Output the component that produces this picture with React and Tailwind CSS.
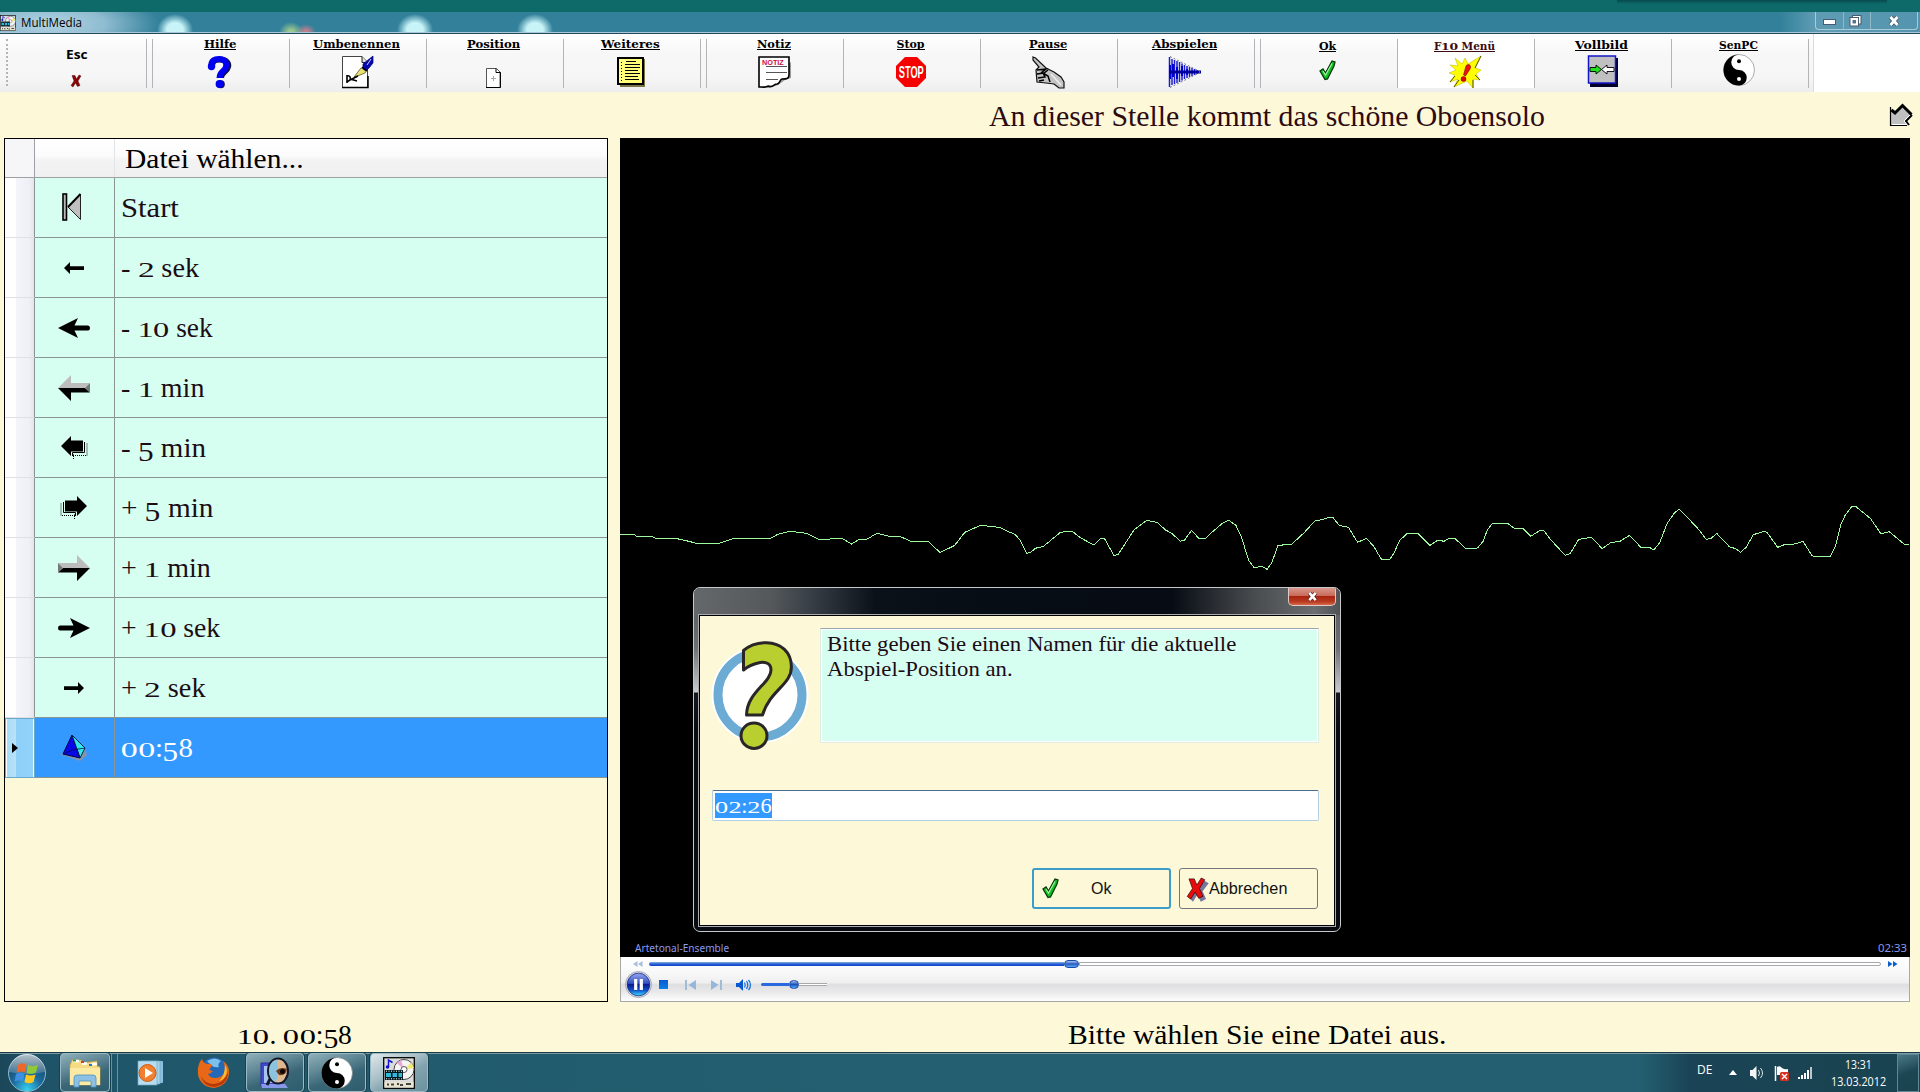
import React, { useLayoutEffect, useRef, useState } from "react";

/* Single-line text stretched horizontally to an exact width. */
function Fit({ w, children, className = "" }) {
  const ref = useRef(null);
  const [s, setS] = useState(1);
  useLayoutEffect(() => {
    if (ref.current) setS(w / ref.current.offsetWidth);
  }, [w]);
  return (
    <span className={"inline-block whitespace-pre text-left " + className} style={{ width: w }}>
      <span ref={ref} className="inline-block origin-left" style={{ transform: `scaleX(${s})` }}>
        {children}
      </span>
    </span>
  );
}

/* Old-style numerals: 0-2 at x-height, 3-5/7/9 hanging below the baseline. */
function OldStyle({ text }) {
  return text.split(/([0-9])/).filter(Boolean).map((c, i) => {
    if (/[012]/.test(c))
      return <span key={i} className="inline-block leading-none origin-[50%_84%] scale-x-[1.18] scale-y-[0.75] mx-[0.045em]">{c}</span>;
    if (/[34579]/.test(c)) return <span key={i} className="inline-block leading-none relative top-[0.16em] scale-x-[1.08] mx-[0.02em]">{c}</span>;
    return <span key={i}>{c}</span>;
  });
}

const SERIF = "font-['Georgia','Liberation_Serif',serif]";

const Svg = ({ w = 32, h = 32, children, crisp, className = "" }) => (
  <svg width={w} height={h} viewBox={`0 0 ${w} ${h}`} className={"block shrink-0 overflow-visible " + className} shapeRendering={crisp ? "crispEdges" : "auto"}>
    {children}
  </svg>
);

const HelpIcon = () => (
  <Svg>
    <g fill="none" stroke="#10103a" strokeWidth="6">
      <path d="M8 11C8 4 12 3.500 16 3.500C23 3.500 25 8 24 11C23 16 17 16 17 22" />
    </g>
    <circle cx="16.800" cy="28.300" r="4" fill="#10103a" />
    <g fill="none" stroke="#0000f0" strokeWidth="6">
      <path d="M7.500 11C6.500 4 11 3 15 3C21 3 23 7 22 11C21 15.500 15.500 15 15.500 22" />
    </g>
    <circle cx="7.500" cy="10.500" r="3.700" fill="#0000f0" />
    <circle cx="15.500" cy="28" r="3.900" fill="#0000f0" />
  </Svg>
);

const RenameIcon = () => (
  <Svg>
    <path d="M1.500 .5H21L26.500 6V31.500H1.500Z" fill="#fff" stroke="#444" />
    <path d="M21 .5V6.500H26.500" fill="#ddd" stroke="#222" />
    <path d="M1 31.500H27V20" fill="none" stroke="#000" strokeWidth="1.500" />
    <path d="M13 21L20 12L26 14L24 17L19 19Z" fill="#e8e070" stroke="#55551a" strokeWidth=".8" />
    <path d="M22 8L32 0V7L28 12L25 15L22 13Z" fill="#0808b0" stroke="#000070" strokeWidth=".7" />
    <path d="M21 11L26 15" stroke="#000" strokeWidth="1.500" />
    <path d="M26 9L30 3" stroke="#fff" strokeWidth=".8" />
    <path d="M6 19V27M6 20C9 19 10 22 9 24L6 26M9 24L17 20M9 23L16 25" fill="none" stroke="#000" strokeWidth="1.600" />
  </Svg>
);

const PageIcon = () => (
  <Svg w={16} h={20} className="-ml-[1px]">
    <path d="M1.500 .5H11.500L15 4V19.500H1.500Z" fill="#fff" stroke="#555" />
    <path d="M11 .5V4.500H15.500V19.500H1" fill="none" stroke="#000" />
    <path d="M6 10.500H11M8.500 8V13" stroke="#aaa" />
  </Svg>
);

const MoreIcon = () => (
  <Svg w={30} crisp>
    <rect x="4" y="3" width="25" height="28" fill="#77774a" />
    <rect x="2" y="2" width="25" height="26" fill="#ffff7a" stroke="#000" strokeWidth="1.500" />
    <path d="M10 5H20M9 8H24M9 11H24M9 14H22M9 17H24M9 20H22M9 23H23" stroke="#000" strokeWidth="1" />
    <path d="M5.500 6V25" stroke="#000" strokeDasharray="1 2" strokeWidth="1.500" />
  </Svg>
);

const NoteIcon = () => (
  <Svg>
    <path d="M3 31L3 32H12L20 29L27 24L33 22V6Z" fill="#999" />
    <path d="M1 1H31V19C31 23 28 23 24 23C21 24 23 27 19 28C16 28 15 31 12 30.500C9 29 8 32 5 31H1Z" fill="#fff" stroke="#000" strokeWidth="1.600" />
    <text transform="translate(4 8.500) scale(1.04 1)" fontSize="7" fill="#d0103a" fontFamily="Liberation Sans" fontWeight="bold">NOTIZ</text>
    <path d="M8 10.500H29M8 16.500H29M8 23.500H20" stroke="#555" />
  </Svg>
);

const StopIcon = () => (
  <Svg>
    <path d="M10 1H22L31 10V22L22 31H10L1 22V10Z" fill="#f60000" />
    <text transform="translate(3.700 21.500) scale(.58 1)" fontSize="16" fill="#fff" fontFamily="Liberation Sans" fontWeight="bold">STOP</text>
  </Svg>
);

const HandIcon = () => (
  <Svg>
    <path d="M1 1L3.500 2L14 12L22 16L29 21L32 26V32H27L22 28L14 27L5 26L4 14L7 11L1 4Z" fill="#c4c4c4" stroke="#111" strokeWidth="1.200" />
    <path d="M5 14L14 13L9 17M5 18L12 17L16 14M6 22L13 21L11 17L16 20L18 26M7 25L12 24" fill="none" stroke="#000" strokeWidth="1.500" />
    <path d="M19 18L29 29" stroke="#eee" strokeWidth="1.500" />
  </Svg>
);

const PlayIcon = () => (
  <Svg>
    <path d="M.5 1V31M3 3V29M5.500 4V28M8 5V27M10.500 6V26M13 7.500V24.500M15.500 9V23M18 10V22M20.500 11V21M23 12V20M25.500 13V19M28 14V18" stroke="#1c1ccc" strokeWidth="1.500" />
    <path d="M1 9V23M4 8V21M8 11V23M13 10V20M18 13V19" stroke="#0000d8" strokeWidth="2" />
    <path d="M0 16H32" stroke="#00009a" strokeWidth="3" />
    <path d="M1 .5L31 15.500M1 31.500L31 16.500" stroke="#777790" strokeDasharray="2 2" />
  </Svg>
);

const CheckIcon = ({ w = 17, h = 21 }) => (
  <svg width={w} height={h} viewBox="0 0 17 21" className="block shrink-0">
    <path d="M1 11L4 9L6.500 13L13 1L16 2L15 6L8.500 19L6 19.500Z" fill="#10c020" stroke="#033a08" strokeWidth="1.300" />
    <path d="M4 11L6.500 15L13 3.500" fill="none" stroke="#a8f0a8" strokeWidth="1.200" />
  </svg>
);

const BurstIcon = () => (
  <Svg>
    <path d="M6 2L13 8L16 2L19 8L32 0L26 12L32 14L27 18L31 24L24 23L24 32L18 25L5 31L9 23L1 26L6 19L0 17L7 14L1 9L9 10Z" fill="#ffff00" stroke="#c8c000" strokeWidth=".6" />
    <path d="M32 0L26 12M24 32V24M5 31L10 24M1 26L6 20M26 19L31 24" stroke="#555500" strokeWidth="1" />
    <path d="M17 10C19 7 23 9 21 13L16.500 20L14.500 19Z" fill="#f01010" stroke="#700" strokeWidth=".6" />
    <circle cx="14.500" cy="23" r="2.500" fill="#e00000" stroke="#700" strokeWidth=".5" />
  </Svg>
);

const FullIcon = () => (
  <Svg w={32}>
    <rect x="4" y="3" width="28" height="29" fill="#00002a" />
    <rect x="2.500" y="1" width="27" height="27" fill="#c0c0c0" stroke="#1414c8" strokeWidth="1.500" />
    <path d="M4 12.500H10V10L15.500 14.500L10 19V16.500H4Z" fill="#20e020" stroke="#000" strokeWidth=".9" />
    <path d="M28 12.500H21V10L15.500 14.500L21 19V16.500H28Z" fill="#fff" stroke="#000" strokeWidth=".9" />
  </Svg>
);

const YinYang = ({ s = 32 }) => (
  <svg width={s} height={s} viewBox="0 0 32 32" className="block shrink-0">
    <circle cx="16" cy="16" r="15.500" fill="#fff" stroke="#777" strokeWidth=".6" />
    <path d="M16 .5A15.500 15.500 0 0 0 16 31.500A7.750 7.750 0 0 0 16 16A7.750 7.750 0 0 1 16 .5Z" fill="#000" />
    <circle cx="16" cy="7.300" r="2" fill="#000" />
    <circle cx="16" cy="25" r="2" fill="#fff" />
  </svg>
);

const MediaIcon = ({ s = 32 }) => (
  <svg width={s} height={s} viewBox="0 0 32 32" className="block shrink-0">
    <rect x=".7" y=".7" width="30.600" height="30.600" fill="#dcdcdc" stroke="#000" strokeWidth="1.300" />
    <circle cx="21" cy="12.500" r="10" fill="#f4f4f4" stroke="#444" />
    <path d="M21 12.500L28 5.500A10 10 0 0 1 31 11Z" fill="#f0e878" />
    <path d="M21 12.500L14 6A10 10 0 0 1 18 3Z" fill="#e8a8d8" />
    <circle cx="21" cy="12.500" r="3" fill="#fff" stroke="#555" />
    <path d="M5.500 10V3L9.500 5.500" fill="none" stroke="#1010d0" strokeWidth="1.500" />
    <circle cx="4.500" cy="10" r="1.800" fill="#1010d0" />
    <rect x="2" y="13" width="18" height="10" fill="#001820" />
    <path d="M3 16H8V20H3ZM9.500 16H14V20H9.500ZM15.500 16H19V20H15.500Z" fill="#30b8d8" />
    <path d="M3 14.200H20M3 21.800H20" stroke="#fff" strokeDasharray="1 1.500" />
    <rect x="1.500" y="25" width="29" height="5.500" fill="#e8e4cc" />
    <path d="M4 27.500H6M8 27.500H11M14 27H16M17 28H20M23 27H28" stroke="#444" strokeWidth="2" />
  </svg>
);

const RedX = ({ w = 10, h = 12, c = "#8c0404", shadow }) => (
  <svg width={w} height={h} viewBox="0 0 20 24" className="block shrink-0 overflow-visible">
    {shadow && <path d="M5 1L12 9L18 1L23 4L16 13L20 22L14 25L10 17L5 25L1 21L8 12L3 4Z" transform="translate(1.5 2)" fill="#77779a" />}
    <path d="M2 1L8 1L11 8L16 0L20 2L14 12L18 21L13 23L9 16L4 24L0 21L6 12Z" fill={c} stroke="#300" strokeWidth=".8" />
  </svg>
);

const items = [
  { t: "Hilfe", w: 32, icon: <HelpIcon /> },
  { t: "Umbenennen", w: 87, icon: <RenameIcon /> },
  { t: "Position", w: 53, icon: <PageIcon /> },
  { t: "Weiteres", w: 59, icon: <MoreIcon /> },
];
const items2 = [
  { t: "Notiz", w: 34, icon: <NoteIcon /> },
  { t: "Stop", w: 28, icon: <StopIcon /> },
  { t: "Pause", w: 38, icon: <HandIcon /> },
  { t: "Abspielen", w: 65, icon: <PlayIcon /> },
];
const items3 = [
  { t: "Ok", w: 17, icon: <CheckIcon />, pad: "pb-[7px]", low: "mt-[2px]" },
  { t: "F10 Menü", w: 61, icon: <BurstIcon />, color: "text-[#3c0a10] border-[#3c0a10]", hot: "bg-white", low: "mt-[2px]" },
  { t: "Vollbild", w: 53, icon: <FullIcon />, pad: "pb-[1px]", low: "mt-[1px]" },
  { t: "SenPC", w: 39, icon: <YinYang />, pad: "pb-[2px]", low: "mt-[1px]" },
];

const Group = ({ list }) => (
  <div className="flex border-l border-[#b4b4b8] h-[49px]">
    {list.map((it) => (
      <div key={it.t} className={"w-[137px] h-[49px] border-r border-[#b4b4b8] flex flex-col items-center justify-between pr-[3px] " + (it.hot || "")}>
        <div className={"h-[11px] leading-[11px] border-b text-[11px] font-bold font-['Georgia','DejaVu_Serif',serif] " + (it.color || "text-black border-black") + " " + (it.low || "")}>
          <Fit w={it.w} className="align-top"><OldStyle text={it.t} /></Fit>
        </div>
        <div className={it.pad || ""}>{it.icon}</div>
      </div>
    ))}
  </div>
);

const ArrowSmall = () => <Svg w={20} h={12}><path d="M0 6L6 0V4.300H20V8H6V12Z" fill="#000" /></Svg>;
const ArrowMid = () => <Svg w={32} h={20}><path d="M0 10L20 0L16.500 7.500H30Q32 7.500 32 10Q32 12.500 30 12.500H16.500L20 20Z" fill="#000" /></Svg>;
const Arrow3d = ({ flip }) => (
  <Svg w={32} h={26}>
    <g transform={flip ? "translate(32 0) scale(-1 1)" : undefined}>
      <path d="M0 13L13 0V8H32L27 13Z" fill="#bdbdbd" />
      <path d="M0 13H27L32 17.500H13V26Z" fill="#000" />
      <path d="M32 8V17.500L27 13Z" fill="#777" />
    </g>
  </Svg>
);
const ArrowBlock = () => (
  <Svg w={26} h={24}>
    <path d="M12.500 23V18.500M12 19.500H26V7" fill="none" stroke="#000" strokeDasharray="1 1" />
    <path d="M11.500 20V16.500H23.500V6" fill="none" stroke="#000" />
    <path d="M0 10L10 0V4.500H22V15.500H10V20Z" fill="#000" />
  </Svg>
);
const Flip = ({ children }) => <div className="-scale-x-100">{children}</div>;

const StartIcon = () => (
  <Svg w={20} h={28} className="-ml-[3px] -mt-[2px]">
    <rect x="1" y="1" width="3.500" height="26" fill="#b8b8b8" stroke="#000" strokeWidth="1.600" />
    <path d="M18.500 1.500V26.500L6 14Z" fill="#c0c0c0" stroke="#222" strokeWidth="1" />
    <path d="M18.500 1L6 14" stroke="#000" strokeWidth="2" />
  </Svg>
);
const Pyramid = () => (
  <Svg w={28} h={28}>
    <path d="M0 20L20 27L27 21L25 15Z" fill="#8893a5" />
    <path d="M12 1L3 20L20 24Z" fill="#0808e8" stroke="#000050" />
    <path d="M12 1L25 14L20 24Z" fill="#30e8e8" stroke="#002050" />
    <path d="M3 20L12 16L25 14M17 15L20 24" stroke="#001050" fill="none" strokeWidth=".8" />
  </Svg>
);

const rows = [
  { t: "Start", w: 58, icon: <StartIcon /> },
  { t: "- 2 sek", w: 78, icon: <ArrowSmall /> },
  { t: "- 10 sek", w: 92, icon: <ArrowMid /> },
  { t: "- 1 min", w: 83, icon: <Arrow3d /> },
  { t: "- 5 min", w: 85, icon: <ArrowBlock /> },
  { t: "+ 5 min", w: 92, icon: <Flip><ArrowBlock /></Flip> },
  { t: "+ 1 min", w: 90, icon: <Arrow3d flip /> },
  { t: "+ 10 sek", w: 99, icon: <Flip><ArrowMid /></Flip> },
  { t: "+ 2 sek", w: 85, icon: <Flip><ArrowSmall /></Flip> },
  { t: "00:58", w: 72, icon: <Pyramid />, sel: true },
];

const WAVE_A = "24,163 57,163 63,169 98,169 108,175 155,175 178,181 212,192 255,192 295,175 382,175 398,163 428,154 468,160 495,178 553,176 574,192 590,180 610,178 634,160 660,168 690,170 715,184 757,184 768,199 784,217 805,205 819,196 843,157 880,136 925,142 945,154 962,163 975,181 990,220 1000,217 1010,205 1030,199 1070,157 1087,154 1098,154 1120,175 1150,195 1165,176 1175,176 1197,226 1207,224 1245,150 1275,121 1300,127 1320,150 1335,160 1355,184 1365,180 1382,151 1400,177 1415,176 1430,157 1455,130 1470,121 1487,136 1500,170 1517,240 1530,262 1550,260 1561,268";
const WAVE_B = "17,268 28,248 43,196 75,193 105,158 130,123 150,118 163,112 173,112 188,136 210,142 232,187 253,175 270,199 288,237 308,238 318,220 332,181 350,160 375,160 404,196 423,180 437,184 448,176 463,175 488,205 517,204 530,184 540,150 552,130 588,130 603,144 625,146 643,169 664,152 674,151 690,178 725,226 737,221 757,178 788,172 813,206 833,188 855,184 878,166 905,202 925,202 936,210 950,187 967,131 985,98 996,88 1015,112 1040,145 1060,178 1072,175 1085,160 1115,200 1130,206 1142,217 1155,202 1172,164 1198,154 1205,158 1230,202 1248,193 1270,192 1290,184 1312,228 1355,229 1368,196 1380,134 1390,106 1405,81 1415,79 1450,115 1475,161 1495,155 1530,192 1543,193";

const Waveform = () => (
  <svg width="1290" height="110" className="block mt-[352px]" shapeRendering="crispEdges">
    <g fill="none" stroke="#9dfb9d" strokeWidth="1">
      <polyline transform="translate(-10 -10) scale(.4209 .33333)" vectorEffect="non-scaling-stroke" points={WAVE_A} />
      <polyline transform="translate(640 -10) scale(.4209 .33333)" vectorEffect="non-scaling-stroke" points={WAVE_B} />
    </g>
  </svg>
);

const QuestionArt = () => (
  <Svg w={104} h={112}>
    <circle cx="52" cy="55" r="48.500" fill="#fff" />
    <circle cx="52" cy="55" r="42" fill="none" stroke="#6cabd4" strokeWidth="9" />
    <path d="M35.500 30V10.500C42 5 50 2.500 58.500 2.700C73 3 83.500 12 83.400 27C83.400 45 62 50 54.500 75H38.500C39 52 63 43 63 30C63 22 55 21.500 50 23C44 24.500 39 27 35.500 30Z" fill="#b9cf2f" stroke="#2a2627" strokeWidth="3" strokeLinejoin="round" />
    <ellipse cx="46" cy="95.700" rx="13" ry="12.700" fill="#b9cf2f" stroke="#2a2627" strokeWidth="3" />
  </Svg>
);

const Dialog = () => (
  <div className="absolute left-[693px] top-[587px] w-[648px] h-[345px] rounded-[7px] border border-[#c6c8ca] bg-[#06090f] flex flex-col overflow-hidden bg-[linear-gradient(180deg,#5a5d60_0px,#606366_28px,#6d7073_60px,#c9cbcd_104px,#15191f_105px,#080b10_140px,#080b10_100%)]">
    <div className="h-[27px] shrink-0 flex justify-end bg-[linear-gradient(90deg,#65686b_0%,#55585b_12%,#333a42_19%,#0b1119_28%,#070d15_45%,#070c14_74%,#4a4d50_87%,#6a6d70_96%,#505355_100%)]">
      <div className="w-[48px] h-[18px] mr-[4px] rounded-b-[5px] border border-t-0 border-[#e0c8c4] bg-[linear-gradient(180deg,#d9988c_0%,#c86a5a_45%,#a8240f_50%,#b83a20_80%,#d8684a_100%)] flex items-center justify-center">
        <svg width="11" height="9" viewBox="0 0 12 10"><path d="M2.500 1L9.500 9M9.500 1L2.500 9" stroke="#5a2a2a" strokeWidth="4.500" /><path d="M2.500 1L9.500 9M9.500 1L2.500 9" stroke="#fff" strokeWidth="2.800" /></svg>
      </div>
    </div>
    <div className="mx-[5px] w-[636px] h-[311px] shrink-0 border border-black outline outline-1 outline-[#a9acae] bg-[#fcf8d8] flex flex-col">
      <div className="flex h-[126px] pt-[12px]">
        <div className="w-[120px] pl-[8px] pt-[12px] shrink-0"><QuestionArt /></div>
        <div className={"w-[499px] h-[115px] border border-[#e2eae2] border-t-[#9aa6ad] bg-[#d6fff2] outline-1 -outline-offset-2 outline-white pl-[6px] pt-[2px] text-[#1c0a14] text-[22px] leading-[25px] " + SERIF}>
          <Fit w={409} className="block">Bitte geben Sie einen Namen für die aktuelle</Fit>
          <Fit w={186} className="block">Abspiel-Position an.</Fit>
        </div>
      </div>
      <div className="ml-[12px] mt-[48px] w-[607px] h-[31px] border border-[#b5cfe7] border-t-[#4a6e90] bg-white rounded-[2px] pl-[2px] pt-[2px]">
        <div className={"bg-[#3399ff] text-white w-[57px] h-[25px] leading-[26px] text-[21.5px] " + SERIF}><Fit w={57}><OldStyle text="02:26" /></Fit></div>
      </div>
      <div className="flex gap-[8px] mt-[47px] ml-[332px] font-['Arial','Liberation_Sans',sans-serif] text-[16px] text-[#111]">
        <div className="w-[139px] h-[41px] rounded-[3px] border-2 border-[#3c9dc8] flex items-center pl-[8px]">
          <CheckIcon /><Fit w={20} className="ml-[32px]">Ok</Fit>
        </div>
        <div className="w-[139px] h-[41px] rounded-[3px] border border-[#75757a] flex items-center pl-[7px]">
          <RedX w={18} h={21} c="#e80c0c" shadow /><Fit w={78} className="ml-[4px]">Abbrechen</Fit>
        </div>
      </div>
    </div>
  </div>
);

const Player = () => (
  <div className="h-[45px] border border-t-0 border-[#a8a8a4] bg-[linear-gradient(180deg,#fff_0%,#fafafa_30%,#efeff0_59%,#dfdfe0_62%,#e8e8ea_78%,#fdfdfd_100%)] flex flex-col">
    <div className="flex items-center h-[14px] pl-[12px]">
      <Svg w={10} h={6}><path d="M0 3L4.500 0V6ZM5 3L9.500 0V6Z" fill="#a9c0dc" /></Svg>
      <div className="ml-[6px] w-[415px] h-[4px] bg-[linear-gradient(180deg,#8ab0d8_0%,#2a62d8_50%,#1040c8_100%)] rounded-l" />
      <div className="w-[15px] h-[8px] rounded-[4px] border border-[#1a4aa8] bg-[linear-gradient(180deg,#a8c8f0_0%,#2a58c0_50%,#58b0f8_100%)]" />
      <div className="w-[802px] h-[4px] border border-[#a8a8ac] bg-white rounded-r" />
      <Svg w={10} h={6} className="ml-[7px]"><path d="M0 0L4.500 3L0 6ZM5 0L9.500 3L5 6Z" fill="#0a60c8" /></Svg>
    </div>
    <div className="flex items-center h-[27px] pl-[4px]">
      <Svg w={27} h={27}>
        <defs><linearGradient id="pp" x1="0" y1="0" x2="0" y2="1"><stop offset="0" stopColor="#9aa8f0" /><stop offset=".45" stopColor="#3050c0" /><stop offset=".5" stopColor="#0a1c90" /><stop offset=".75" stopColor="#1050c8" /><stop offset="1" stopColor="#40e0ff" /></linearGradient></defs>
        <circle cx="13.500" cy="13.500" r="13" fill="#d6d8e4" stroke="#a8aab8" />
        <circle cx="13.500" cy="13.500" r="11.300" fill="url(#pp)" stroke="#182c80" strokeWidth=".8" />
        <path d="M10.700 8V19M16.300 8V19" stroke="#fff" strokeWidth="3.200" />
      </Svg>
      <div className="ml-[7px] w-[9px] h-[9px] bg-[linear-gradient(180deg,#0a58d0,#0a80e8)]" />
      <Svg w={12} h={10} className="ml-[17px]"><path d="M1 0V10" stroke="#a0bcd8" strokeWidth="2" /><path d="M11 0V10L3.500 5Z" fill="#94b8dc" /></Svg>
      <Svg w={12} h={10} className="ml-[13px]"><path d="M11 0V10" stroke="#a0bcd8" strokeWidth="2" /><path d="M1 0V10L8.500 5Z" fill="#94b8dc" /></Svg>
      <Svg w={16} h={12} className="ml-[14px]"><path d="M0 4H3L7 0V12L3 8H0Z" fill="#0a58d0" /><path d="M8.500 3.500Q10 6 8.500 8.500M10.500 2Q13 6 10.500 10M12.500 .8Q16.500 6 12.500 11.200" fill="none" stroke="#1a74d8" strokeWidth="1.300" /></Svg>
      <div className="ml-[9px] w-[28px] h-[3px] bg-[#2a68e0] rounded-l" />
      <div className="w-[10px] h-[9px] rounded-full border border-[#1a4aa8] bg-[linear-gradient(180deg,#a0c0f0,#2050b8_50%,#50b0f8)]" />
      <div className="w-[28px] h-[3px] border-y border-[#a8a8ac] bg-white" />
    </div>
  </div>
);

const StartOrb = () => (
  <Svg w={40} h={40}>
    <defs>
      <radialGradient id="orb" cx=".5" cy=".95" r=".9"><stop offset="0" stopColor="#38d0f0" /><stop offset=".45" stopColor="#1c6ca0" /><stop offset="1" stopColor="#16405c" /></radialGradient>
      <linearGradient id="orbh" x1="0" y1="0" x2="0" y2="1"><stop offset="0" stopColor="#fff" stopOpacity=".7" /><stop offset="1" stopColor="#fff" stopOpacity=".15" /></linearGradient>
    </defs>
    <circle cx="20" cy="20" r="18.500" fill="url(#orb)" stroke="#8fb8c8" strokeWidth="1" />
    <path d="M2 19A18 18 0 0 1 38 19Q20 23 2 19Z" fill="url(#orbh)" />
    <path d="M11 12Q15 9 19.500 11.500L18 19.500Q14 17.500 9.500 19.500Z" fill="#f06828" />
    <path d="M21 12Q26 14.500 31 11.500L29 19.500Q25 22 19.500 20Z" fill="#90c838" />
    <path d="M9 21Q13 18.500 17.700 21L16 28.500Q12 26.500 7.500 28.500Z" fill="#3c90e0" />
    <path d="M19 21.500Q24 23.500 28.500 21.500L26.500 29Q22 31.500 17.500 29Z" fill="#fcc820" />
  </Svg>
);
const Explorer = () => (
  <Svg w={32} h={30}>
    <path d="M2 5L3 2H12L14 5L28 3V8L31 9V27H1V7Z" fill="#f5dc84" stroke="#c8a040" strokeWidth=".7" />
    <path d="M4 3H10M13 5.500H18M23 6H28" stroke="#fff" strokeWidth="2.500" />
    <path d="M4 2.500H7" stroke="#28a050" strokeWidth="2" /><path d="M12 4H15" stroke="#d04020" strokeWidth="2" /><path d="M20 7H23" stroke="#2878c0" strokeWidth="2" />
    <path d="M1 10H31V27H1Z" fill="#fbeaa4" />
    <path d="M5 29V20Q5 17 8 17H24Q27 17 27 20V29H22V23H10V29Z" fill="#8cc0e4" stroke="#5090c0" strokeWidth=".8" />
  </Svg>
);
const Wmp = () => (
  <Svg w={26} h={26}>
    <rect x="5" y="1" width="20" height="22" rx="1" fill="#8cc0dc" /><rect x="3" y="1" width="19" height="23" fill="#a8d4ea" stroke="#60a0c0" strokeWidth=".6" />
    <rect x="0" y="1" width="19" height="24" fill="#b8dcf0" stroke="#6aa8c8" strokeWidth=".7" />
    <circle cx="9.500" cy="13" r="8.500" fill="#f08030" stroke="#d05c10" /><path d="M7 8L15 13L7 18Z" fill="#fff" />
  </Svg>
);
const Firefox = () => (
  <Svg w={33} h={33}>
    <circle cx="17" cy="14.500" r="13" fill="#2468b8" /><path d="M10 5Q18 0 24 5Q20 8 22 11Q17 12 14 9Z" fill="#7cc0ec" />
    <path d="M2 8Q3 5 5 3Q6 7 10 8Q14 7 15 9Q14 12 12 13Q13 15 16 15Q14 18 11 18Q13 22 18 22Q26 22 28 14Q28 9 26 5Q33 10 32 18Q30 30 17 32Q4 31 1 19Q0 13 2 8Z" fill="#e86818" />
    <path d="M4 20Q8 28 17 28Q27 27 31 16Q31 29 17 31Q6 30 4 20Z" fill="#b83808" />
    <path d="M28 9Q31 14 29 19Q27 24 22 25Q28 20 28 9Z" fill="#f8c030" />
  </Svg>
);
const Viewer = () => (
  <Svg w={32} h={32}>
    <path d="M2 6H24V29H2Z" fill="#4048d0" stroke="#2830a0" /><path d="M5 9H22V26H5Z" fill="#a8c4e8" />
    <path d="M2 27H26L29 31H3Z" fill="#8898e8" />
    <ellipse cx="19" cy="14" rx="10" ry="12.500" fill="#e0b890" stroke="#10182a" strokeWidth="2" />
    <path d="M18 2.500Q10 5 10 14Q10 22 17 25.500Q21 14 18 2.500Z" fill="#8cc4e0" />
    <path d="M17 14Q21 9 28 12Q27 19 20 18Z" fill="#6a3818" /><circle cx="23.500" cy="14.500" r="2.500" fill="#100808" />
    <path d="M11 22L8 28" stroke="#10182a" strokeWidth="3" />
  </Svg>
);

const TaskBtn = ({ className, children }) => (
  <div className={"h-[39px] rounded-[4px] border border-[#9db9c4] shadow-[0_0_0_1px_#17404e] flex items-center justify-center " + className}>{children}</div>
);
const GLASS = "bg-[linear-gradient(160deg,#8fb0ba_0%,#5f8795_35%,#3a6777_60%,#2d5d6e_100%)]";

const Taskbar = () => (
  <div className="h-[40px] flex items-center border-t border-[#1c3a44] bg-[#215b6d] bg-[linear-gradient(90deg,#1a4658_0px,#1f5468_40px,#215b6d_420px,#235f70_900px,#235f70_1640px,#1a4456_1690px,#1a4350_1920px)] shadow-[inset_0_1px_0_#7a9ca6]">
    <div className="ml-[7px]"><StartOrb /></div>
    <TaskBtn className={"ml-[13px] w-[50px] " + GLASS}><Explorer /></TaskBtn>
    <div className="w-[7px] h-[38px] border-x border-[#6d909c] ml-[1px]" />
    <div className="ml-[20px]"><Wmp /></div>
    <div className="ml-[33px]"><Firefox /></div>
    <TaskBtn className={"ml-[16px] w-[58px] " + GLASS}><Viewer /></TaskBtn>
    <TaskBtn className={"ml-[4px] w-[58px] " + GLASS}><YinYang /></TaskBtn>
    <TaskBtn className="ml-[4px] w-[58px] bg-[linear-gradient(150deg,#dfe8ea_0%,#a9c0c8_40%,#83a3ae_60%,#6a92a0_100%)]"><MediaIcon /></TaskBtn>
    <div className="flex-1" />
    <div className="flex items-center h-full text-white font-['Segoe_UI','Open_Sans',sans-serif] text-[12px]">
      <Fit w={15} className="mr-[17px] -mt-[5px]">DE</Fit>
      <Svg w={8} h={5} className="mr-[13px]"><path d="M0 5L4 0L8 5Z" fill="#fff" /></Svg>
      <Svg w={14} h={14} className="mr-[10px]"><path d="M0 4H2.500L6.500 0V14L2.500 10H0Z" fill="#f0f4f4" /><path d="M8.500 4Q10.500 7 8.500 10M10.500 2Q14.500 7 10.500 12" fill="none" stroke="#dfe8e8" /></Svg>
      <Svg w={16} h={16} className="mr-[8px]"><path d="M1.500 1V16" stroke="#fff" strokeWidth="1.500" /><path d="M3 2Q6 0 8 3Q11 5 14 4V10H3Z" fill="#fff" /><rect x="6" y="7" width="9" height="9" rx="1.500" fill="#d83020" /><path d="M8 9L13 14M13 9L8 14" stroke="#fff" strokeWidth="1.400" /></Svg>
      <Svg w={15} h={12} className="mr-[17px]"><path d="M1 12V10M4 12V8M7 12V6M10 12V3" stroke="#fff" strokeWidth="2" /><path d="M13 12V0" stroke="#b8c8cc" strokeWidth="2" /></Svg>
      <div className="w-[56px] flex flex-col items-center leading-[17px] mr-[11px]">
        <Fit w={27}>13:31</Fit>
        <Fit w={55}>13.03.2012</Fit>
      </div>
      <div className="w-[22px] h-[38px] mr-[1px] border border-[#5f8894] bg-[linear-gradient(160deg,#4c7885_0%,#1d4653_50%,#1a424f_100%)]" />
    </div>
  </div>
);

export default function App() {
  return (
    <div className="relative w-[1920px] h-[1092px] overflow-hidden flex flex-col bg-[#fcf8d8]">
      <div className="h-[12px] shrink-0 flex justify-end bg-[#0d6a69]">
        <div className="w-[270px] mr-[33px] h-[4px] bg-[linear-gradient(180deg,#07484c,#0d6a69)]" />
      </div>
      <div className="h-[22px] shrink-0 flex items-center border-b border-[#1f4a60] shadow-[inset_0_-1px_0_#a9c6d4] bg-[#32809a] bg-[radial-gradient(ellipse_18px_16px_at_175px_18px,#c8f4f8_45%,#c8f4f800_100%),radial-gradient(ellipse_18px_16px_at_415px_18px,#c8f4f8_45%,#c8f4f800_100%),radial-gradient(ellipse_18px_16px_at_535px_18px,#c8f4f8_45%,#c8f4f800_100%),radial-gradient(ellipse_12px_10px_at_291px_20px,#9cc890_20%,#9cc89000_100%),radial-gradient(ellipse_10px_8px_at_306px_20px,#c08090_20%,#c0809000_100%),radial-gradient(ellipse_110px_34px_at_50px_12px,#b4d4e4_0%,#8fbcd0_50%,#8fbcd000_100%),linear-gradient(90deg,#32809a_0px,#32809a_1780px,#5f9cb4_1815px,#5494ae_1920px)]">
        <MediaIcon s={16} />
        <Fit w={61} className="ml-[5px] text-[12px] leading-[20px] text-black font-['Segoe_UI','Open_Sans',sans-serif]">MultiMedia</Fit>
        <div className="flex-1" />
        <div className="self-start flex h-[18px] mr-[2px] border border-t-0 border-[#a8cbd8] rounded-b-[4px]">
          <div className="w-[28px] border-r border-[#8fb8c8] flex items-center justify-center"><Svg w={13} h={6} className="mt-[3px]"><rect x=".5" y=".5" width="12" height="5" fill="#fff" stroke="#4a5a70" /></Svg></div>
          <div className="w-[27px] border-r border-[#8fb8c8] flex items-center justify-center"><Svg w={13} h={12} className="mr-[3px]"><rect x="3.500" y=".5" width="8.500" height="8.500" fill="#fff" stroke="#4a5a70" /><rect x="1" y="2.500" width="8.500" height="8.500" fill="#fff" stroke="#4a5a70" /><rect x="4" y="5.500" width="2.500" height="2.500" fill="#4a80a0" stroke="#4a5a70" strokeWidth=".8" /></Svg></div>
          <div className="w-[46px] flex items-center justify-center"><Svg w={12} h={10} className="mr-[1px]"><path d="M2.500 1L9.500 9M9.500 1L2.500 9" stroke="#4a5a70" strokeWidth="4.500" /><path d="M2.500 1L9.500 9M9.500 1L2.500 9" stroke="#fff" strokeWidth="2.800" /></Svg></div>
        </div>
      </div>
      <div className="h-[58px] shrink-0 flex bg-white">
        <div className="w-[1814px] pt-[5px] flex bg-[linear-gradient(180deg,#ffffff_0%,#f7f7f8_35%,#f6f6f7_75%,#ededee_100%)] border-r border-[#dcdce0]">
          <div className="ml-[6px] mr-[2px] w-[2px] h-[47px] border-l-2 border-dotted border-[#b4b4b8]" />
          <div className="w-[137px] h-[49px] border-r border-[#b4b4b8] flex flex-col items-center pr-[3px] pt-[8px]">
            <Fit w={22} className="text-[12.5px] leading-[16px] font-bold text-black font-['Segoe_UI','Open_Sans',sans-serif]">Esc</Fit>
            <div className="mt-[12px] mr-[2px]"><RedX /></div>
          </div>
          <div className="ml-[5px]"><Group list={items} /></div>
          <div className="ml-[5px]"><Group list={items2} /></div>
          <div className="ml-[5px]"><Group list={items3} /></div>
        </div>
      </div>

      <div className="h-[46px] shrink-0 flex items-center pl-[989px]">
        <Fit w={556} className={"text-[28.5px] leading-[44px] mt-[3px] text-[#2c0a10] " + SERIF}>An dieser Stelle kommt das schöne Oboensolo</Fit>
        <Svg w={25} h={24} className="ml-[344px]">
          <path d="M1.500 22.500V5L6 9L13.500 1.500L23 11.500L17 18L20 21L18 22.500Z" fill="#c0c0c0" />
          <path d="M2.500 7L6 10L13.500 2.500L22.500 11.500" fill="none" stroke="#000" strokeWidth="3" />
          <path d="M23 12L17 18L20 22" fill="none" stroke="#000" strokeWidth="2" />
          <path d="M21 12L15 18L18 21.500H3" fill="none" stroke="#fff" strokeWidth="1" />
          <path d="M1.500 4V22.500H18" fill="none" stroke="#000" strokeWidth="1.200" />
        </Svg>
      </div>

      <div className="flex h-[864px] shrink-0 pl-[4px]">
        <div className="w-[604px] border border-black flex flex-col">
          <div className="flex h-[39px] border-b border-[#a0a0a4] bg-[linear-gradient(180deg,#fff_0%,#fbfbfc_45%,#f3f3f4_55%,#f0f0f1_100%)]">
            <div className="w-[30px] border-r border-[#a0a0a4] bg-[#f6f6f8]" />
            <div className="w-[80px] border-r border-[#e4e4e6]" />
            <Fit w={178} className={"ml-[10px] text-[27.5px] leading-[39px] text-black " + SERIF}>Datei wählen...</Fit>
          </div>
          {rows.map((r) => (
            <div key={r.t} className="flex h-[60px]">
              {r.sel ? (
                <div className="w-[30px] border-r-2 border-white flex items-center bg-[linear-gradient(90deg,#fff_0px,#fff_2px,#a8dcf8_2px,#b8e2f8_11px,#8ed0f8_11px,#90d2f8_100%)] outline-1 -outline-offset-1 outline-[#6aa8cc] pl-[7px]">
                  <Svg w={6} h={10}><path d="M0 0L6 5L0 10Z" fill="#000" /></Svg>
                </div>
              ) : (
                <div className="w-[30px] border-r border-r-[#8a9592] border-b border-b-[#e0e0e4] bg-[linear-gradient(90deg,#fff_0px,#fff_11px,#f4f4fa_11px,#efeff6_24px,#e4e4ea_100%)]" />
              )}
              <div className={"w-[80px] border-r border-b border-[#8a9592] flex items-center justify-center pr-[2px] " + (r.sel ? "bg-[#3399ff]" : "bg-[#d7fff1]")}>{r.icon}</div>
              <div className={"flex-1 border-b border-[#8a9592] pl-[6px] text-[28px] leading-[59px] " + SERIF + (r.sel ? " bg-[#3399ff] text-white" : " bg-[#d7fff1] text-[#1c0c14]")}>
                <Fit w={r.w}><OldStyle text={r.t} /></Fit>
              </div>
            </div>
          ))}
        </div>

        <div className="ml-[12px] w-[1290px] flex flex-col">
          <div className="flex-1 bg-black flex flex-col">
            <Waveform />
            <div className="mt-auto flex justify-between pl-[15px] pr-[3px] pb-[1px] text-[11px] leading-[17px] text-[#8a9af0] font-['Tahoma','Noto_Sans',sans-serif]">
              <Fit w={94}>Artetonal-Ensemble</Fit>
              <Fit w={29}>02:33</Fit>
            </div>
          </div>
          <Player />
        </div>
      </div>

      <div className={"h-[50px] shrink-0 flex pt-[14px] text-[27.5px] leading-[36px] text-black " + SERIF}>
        <Fit w={115} className="ml-[237px] mt-[1px]"><OldStyle text="10. 00:58" /></Fit>
        <Fit w={378} className="ml-[716px] mt-[1px]">Bitte wählen Sie eine Datei aus.</Fit>
      </div>
      <Taskbar />
      <Dialog />
    </div>
  );
}
